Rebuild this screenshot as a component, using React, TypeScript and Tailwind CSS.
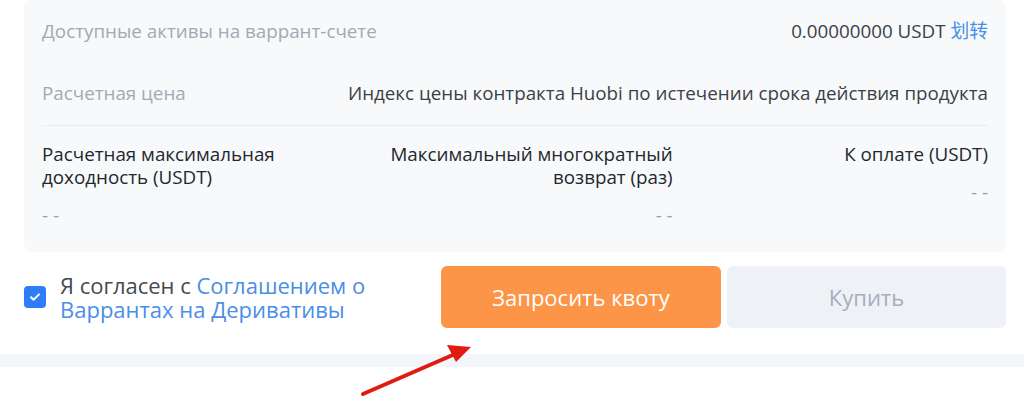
import React from "react";

const font = { fontFamily: '"Open Sans", "Noto Sans", "Noto Sans CJK SC", sans-serif' };

function Column({ label, align }: { label: React.ReactNode; align: "left" | "right" }) {
  return (
    <div className={`flex flex-col ${align === "right" ? "items-end text-right" : "items-start text-left"}`}>
      <div className="text-[18.8px] leading-[23px] text-[#23272e]">{label}</div>
      <div className="mt-[15px] text-[18.8px] leading-[23px] text-[#8ea3bd]">- -</div>
    </div>
  );
}

export default function App() {
  return (
    <div className="relative h-[396px] w-full overflow-hidden bg-white" style={font}>
      {/* info card */}
      <div className="ml-[24px] mr-[18px] rounded-lg bg-[#f7f9fb] px-[18px] pb-[25px]">
        <div className="flex h-[62px] items-center justify-between text-[18.8px]">
          <span className="text-[#a3a9b2]">Доступные активы на варрант-счете</span>
          <span className="text-[#3b3f46]">
            0.00000000 USDT <span className="text-[#4a8ee6]">划转</span>
          </span>
        </div>
        <div className="flex h-[64px] items-center justify-between border-b border-[#e9edf1] text-[18.8px]">
          <span className="text-[#a3a9b2]">Расчетная цена</span>
          <span className="text-[#3b3f46]">
            Индекс цены контракта Huobi по истечении срока действия продукта
          </span>
        </div>
        <div className="grid grid-cols-3 pt-[17px]">
          <Column
            align="left"
            label={
              <>
                Расчетная максимальная
                <br />
                доходность (USDT)
              </>
            }
          />
          <Column
            align="right"
            label={
              <>
                Максимальный многократный
                <br />
                возврат (раз)
              </>
            }
          />
          <Column align="right" label="К оплате (USDT)" />
        </div>
      </div>

      {/* agreement + actions */}
      <div className="ml-[24px] mr-[18px] mt-[14px] flex items-center">
        <label className="flex flex-1 items-center gap-[14px]">
          <span className="flex h-[22px] w-[22px] shrink-0 items-center justify-center rounded-[4px] bg-[#2f7df6]">
            <svg width="14" height="14" viewBox="0 0 14 14" fill="none">
              <path d="M3 7.2l2.6 2.6L11 4.4" stroke="white" strokeWidth="2" strokeLinecap="round" strokeLinejoin="round" />
            </svg>
          </span>
          <span className="text-[22px] leading-[24px] text-[#444a52]">
            Я согласен с <span className="text-[#4a8ee6]">Соглашением о</span>
            <br />
            <span className="text-[#4a8ee6]">Варрантах на Деривативы</span>
          </span>
        </label>
        <div className="flex gap-[6px]">
          <button className="h-[62px] w-[280px] rounded-md bg-[#fd9548] text-[22px] text-white">
            Запросить квоту
          </button>
          <button className="h-[62px] w-[279px] rounded-md bg-[#eef2f6] text-[22px] text-[#a6aeb8]">
            Купить
          </button>
        </div>
      </div>

      <div className="mt-[26px] h-[13px] w-full bg-[#f3f6f9]" />

      {/* annotation arrow */}
      <svg className="absolute left-[355px] top-[335px]" width="125" height="61" viewBox="0 0 125 61">
        <path d="M8 59 L100 19" stroke="#e01b12" strokeWidth="4" strokeLinecap="round" />
        <path d="M116 12 L92 10 L101 27 Z" fill="#e01b12" />
      </svg>
    </div>
  );
}
